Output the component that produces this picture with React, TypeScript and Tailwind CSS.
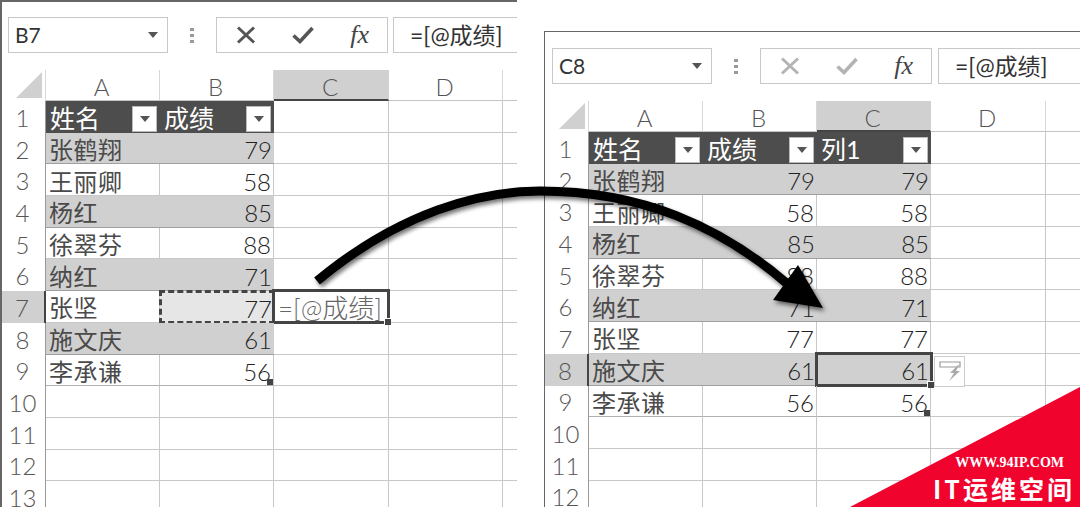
import React from 'react';

const data: [string, number][] = [
  ['张鹤翔', 79],
  ['王丽卿', 58],
  ['杨红', 85],
  ['徐翠芬', 88],
  ['纳红', 71],
  ['张坚', 77],
  ['施文庆', 61],
  ['李承谦', 56],
];

const cellFont = 'text-[24px] leading-none text-[#4a4a4a]';

const Caret: React.FC<{ className?: string }> = ({ className }) => (
  <svg className={className} width="10" height="6" viewBox="0 0 10 6">
    <path d="M0 0h10L5 6z" fill="#555" />
  </svg>
);

const FilterButton: React.FC = () => (
  <div className="absolute right-[3px] bottom-[1px] w-[25px] h-[26px] bg-white border border-[#bbb] flex items-center justify-center">
    <Caret />
  </div>
);

const Handle: React.FC = () => (
  <div className="absolute right-[-3px] bottom-[-3px] w-[7px] h-[7px] bg-[#444] border-l border-t border-white z-10" />
);

const FormulaBar: React.FC<{
  name: string;
  disabled: boolean;
  nameClass: string;
  dotsClass: string;
  buttonsClass: string;
  inputClass: string;
}> = ({ name, disabled, nameClass, dotsClass, buttonsClass, inputClass }) => {
  const stroke = disabled ? '#b4b4b4' : '#555';
  return (
    <div className="flex h-[36px] font-['Lato','Noto_Sans_CJK_SC',sans-serif] text-[#333]">
      <div className={`${nameClass} h-full border border-[#c8c8c8] flex items-center justify-between pl-[6px] pr-[9px] text-[21px]`}>
        <span>{name}</span>
        <Caret />
      </div>
      <div className={`${dotsClass} flex flex-col items-center justify-center gap-[3px]`}>
        <div className="w-[4px] h-[3px] bg-[#999]" />
        <div className="w-[4px] h-[3px] bg-[#999]" />
        <div className="w-[4px] h-[3px] bg-[#999]" />
      </div>
      <div className={`${buttonsClass} h-full border border-[#c8c8c8] flex items-center justify-between pl-[19px] pr-[18px]`}>
        <svg width="20" height="18" viewBox="0 0 20 18">
          <path d="M2 1.5 18 16.5M18 1.5 2 16.5" stroke={stroke} strokeWidth="3" fill="none" />
        </svg>
        <svg width="22" height="18" viewBox="0 0 22 18">
          <path d="M1.5 9.5 8 15.5 20.5 2" stroke={stroke} strokeWidth="3.6" fill="none" />
        </svg>
        <span className="font-['Liberation_Serif',serif] italic text-[26px] leading-none text-[#444]">fx</span>
      </div>
      <div className={`${inputClass} h-full border border-r-0 border-[#c8c8c8] flex items-center pl-[16px] text-[23px]`}>
        =[@成绩]
      </div>
    </div>
  );
};

const Sheet: React.FC<{
  colClasses: string[];
  tableCols: number;
  activeCol: number;
  activeRow: number;
  rowCount: number;
}> = ({ colClasses, tableCols, activeCol, activeRow, rowCount }) => {
  const rows = Array.from({ length: rowCount }, (_, i) => i + 1);
  const rowHeaderClass = 'w-[44px] shrink-0';
  return (
    <div className={`font-['Lato','Noto_Sans_CJK_SC',sans-serif] ${cellFont}`}>
      {/* Column headers */}
      <div className="flex h-[31px]">
        <div className={`${rowHeaderClass} flex items-end justify-end pr-[3px] pb-[3px] border-r border-[#d8d8d8]`}>
          <svg width="26" height="26" viewBox="0 0 26 26">
            <path d="M26 0v26H0z" fill="#d0d0d0" />
          </svg>
        </div>
        {colClasses.map((c, i) => (
          <div
            key={i}
            className={`${c} flex items-center justify-center pt-[4px] pr-[2px] font-light text-[#555] border-r ${i === activeCol ? 'bg-[#d0d0d0] border-[#d0d0d0] border-b-2 border-b-[#444]' : 'border-[#d8d8d8] border-b border-b-[#c4c4c4]'}`}
          >
            {'ABCD'[i]}
          </div>
        ))}
      </div>
      {rows.map(r => {
        const rec = r >= 2 && r <= 9 ? data[r - 2] : null;
        const banded = r % 2 === 0 && r <= 9;
        const activeRowHere = r === activeRow;
        return (
          <div key={r} className="flex h-[31.7px]">
            <div
              className={`${rowHeaderClass} flex items-center justify-center pr-[2px] pt-[2px] font-light text-[#555] ${activeRowHere ? 'bg-[#d0d0d0] border-r-2 border-[#444]' : 'border-r border-[#999]'}`}
            >
              {r}
            </div>
            {colClasses.map((c, i) => {
              const inTable = i < tableCols && r <= 9;
              const isHeader = inTable && r === 1;
              const isActive = i === activeCol && r === activeRow;
              const isCopySource = activeCol === 2 && activeRow === 7 && i === 1 && r === 7;
              const isEditing = isActive && activeRow === 7;
              let tone = 'border-r border-b border-[#c8c8c8]';
              if (isHeader) tone = 'bg-[#4d4d4d] text-white';
              else if (inTable && banded) tone = 'bg-[#d0d0d0] border-b border-[#a0a0a0]';
              else if (inTable && r === 9) tone = 'border-r border-b border-r-[#c8c8c8] border-b-[#b0b0b0]';
              if (isCopySource) tone = 'bg-[#e6e6e6]';
              const colHead = ['姓名', '成绩', '列1'][i];
              const value = rec ? (i === 0 ? rec[0] : rec[1]) : null;
              return (
                <div key={i} className={`${c} relative flex items-center pt-[4px] ${tone}`}>
                  {isHeader && (
                    <>
                      <span className="pl-[4px] text-[25px]">{colHead}</span>
                      <FilterButton />
                    </>
                  )}
                  {!isHeader && inTable && i === 0 && <span className="pl-[3px] tracking-[0.5px]">{value}</span>}
                  {!isHeader && inTable && i > 0 && <span className="ml-auto pr-[2px] font-light text-[#222]">{value}</span>}
                  {isCopySource && (
                    <div className="absolute inset-[-1px] border-[3px] border-dashed border-[#444]" />
                  )}
                  {isEditing && (
                    <>
                      <span className="pl-[4px] whitespace-nowrap font-light text-[26px] text-[#666]">=[@成绩]</span>
                      <div className="absolute inset-[-2px] border-[3px] border-[#444]" />
                      <Handle />
                    </>
                  )}
                  {isActive && !isEditing && (
                    <>
                      <div className="absolute inset-[-2px] border-[3px] border-[#444]" />
                      <Handle />
                      <div className="absolute left-full top-[2px] ml-[3px] w-[31px] h-[31px] bg-white border border-[#ccc] z-10 flex items-center justify-center">
                        <svg width="24" height="24" viewBox="0 0 24 24">
                          <path d="M2 3h20v5H2z" fill="none" stroke="#999" strokeWidth="1.2" />
                          <path d="M20 6 12 14h4l-5 8 11-10h-4l3-6z" fill="#aaa" />
                        </svg>
                      </div>
                    </>
                  )}
                  {r === 9 && i === tableCols - 1 && (
                    <div className="absolute right-0 bottom-0 w-[6px] h-[6px] bg-[#444]" />
                  )}
                </div>
              );
            })}
          </div>
        );
      })}
    </div>
  );
};

const App: React.FC = () => {
  return (
    <div className="relative flex w-[1080px] h-[507px] overflow-hidden bg-white">
      {/* Before */}
      <div className="w-[517px] h-[507px] shrink-0 overflow-hidden border-t-2 border-l-2 border-[#666]">
        <div className="pt-[15px] pb-[17px]">
          <FormulaBar
            name="B7"
            disabled={false}
            nameClass="ml-[6px] w-[160px]"
            dotsClass="w-[48px]"
            buttonsClass="w-[172px]"
            inputClass="ml-[5px] flex-1"
          />
        </div>
        <Sheet
          colClasses={['w-[114px] shrink-0', 'w-[114px] shrink-0', 'w-[115px] shrink-0', 'w-[114px] shrink-0', 'w-[60px] shrink-0']}
          tableCols={2}
          activeCol={2}
          activeRow={7}
          rowCount={13}
        />
      </div>

      {/* After */}
      <div className="ml-[27px] mt-[31px] w-[536px] h-[476px] shrink-0 overflow-hidden border-t border-l border-[#666]">
        <div className="pt-[16px] pb-[17px]">
          <FormulaBar
            name="C8"
            disabled
            nameClass="ml-[7px] w-[160px]"
            dotsClass="w-[48px]"
            buttonsClass="w-[172px]"
            inputClass="ml-[6px] flex-1"
          />
        </div>
        <Sheet
          colClasses={['w-[114px] shrink-0', 'w-[114px] shrink-0', 'w-[114px] shrink-0', 'w-[115px] shrink-0', 'w-[40px] shrink-0']}
          tableCols={3}
          activeCol={2}
          activeRow={8}
          rowCount={12}
        />
      </div>

      {/* Curved arrow between the two sheets */}
      <svg className="absolute inset-0 drop-shadow-[2px_3px_2px_rgba(0,0,0,0.55)]" width="1080" height="507" viewBox="0 0 1080 507">
        <path d="M317 281C400 212 480 191 540 191C640 191 720 225 790 286" fill="none" stroke="#000" strokeWidth="9" />
        <path d="M773 300 798 265 823 308z" fill="#000" />
      </svg>

      {/* Watermark */}
      <svg className="absolute right-0 bottom-0" width="230" height="120" viewBox="0 0 230 120">
        <path d="M0 120 230 0v120z" fill="#f0042e" />
      </svg>
      <div className="absolute right-[16px] bottom-[37px] font-['Liberation_Serif',serif] font-bold text-[14px] leading-none text-white">
        WWW.94IP.COM
      </div>
      <div className="absolute right-[5px] bottom-[6px] font-['Noto_Sans_CJK_SC',sans-serif] font-bold text-[25px] leading-none tracking-[3px] text-white">
        IT运维空间
      </div>
    </div>
  );
};

export default App;
